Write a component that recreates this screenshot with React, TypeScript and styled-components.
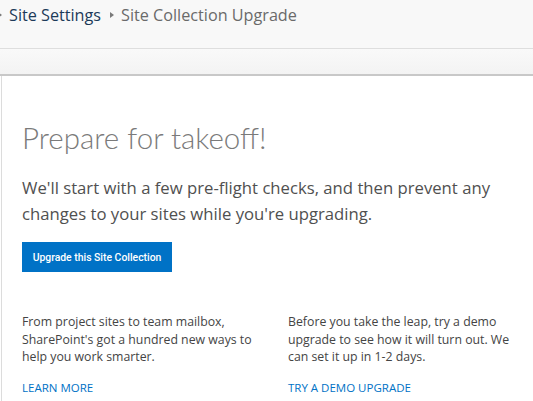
import React from "react";
import styled, { createGlobalStyle } from "styled-components";

const GlobalStyle = createGlobalStyle`
  html, body {
    margin: 0;
    padding: 0;
    background: #ffffff;
    overflow: hidden;
  }
  body {
    font-family: "Open Sans", "Noto Sans", sans-serif;
  }
`;

const Page = styled.div`
  width: 533px;
  height: 401px;
  display: flex;
  flex-direction: column;
  overflow: hidden;
`;

const Header = styled.div`
  height: 49px;
  background: #f8f8f8;
  border-bottom: 1px solid #dedede;
  display: flex;
  align-items: flex-start;
  padding-top: 3px;
  box-sizing: border-box;
`;

const Breadcrumb = styled.nav`
  display: flex;
  align-items: center;
  gap: 7px;
  margin-left: -2px;
  font-size: 16.2px;
  line-height: 24px;
`;

const Crumb = styled.span<{ $current?: boolean }>`
  color: ${(p) => (p.$current ? "#6a6a6a" : "#1c3a58")};
  margin-right: ${(p) => (p.$current ? "0" : "2px")};
`;

const Arrow = styled.span`
  width: 0;
  height: 0;
  border-top: 3px solid transparent;
  border-bottom: 3px solid transparent;
  border-left: 4px solid #7a7a7a;
`;

const Ribbon = styled.div`
  height: 27px;
  background: linear-gradient(to bottom, #f9f9f9, #f3f3f3);
  border-bottom: 2px solid #c8c8c8;
  box-sizing: border-box;
`;

const Content = styled.main`
  flex: 1;
  margin-left: 1px;
  border-left: 1px solid #dcdcdc;
  padding: 42px 0 0 20px;
`;

const Title = styled.h1`
  margin: 0;
  font-family: "Lato", "Open Sans", sans-serif;
  font-weight: 300;
  font-size: 29.5px;
  line-height: 40px;
  color: #7a7a7a;
`;

const Lead = styled.p`
  margin: 17px 0 0;
  font-size: 16.7px;
  font-weight: 400;
  line-height: 26px;
  color: #505050;
`;

const PrimaryButton = styled.button`
  display: flex;
  align-items: center;
  justify-content: center;
  margin-top: 15px;
  height: 30px;
  width: 150px;
  padding: 0;
  border: none;
  background: #0072c6;
  color: #ffffff;
  font-family: "Roboto", "Liberation Sans", Arial, sans-serif;
  font-size: 10.4px;
  font-weight: 500;
  cursor: pointer;
`;

const Columns = styled.div`
  margin-top: 41px;
  display: grid;
  grid-template-columns: 266px 1fr;
`;

const Column = styled.div`
  display: flex;
  flex-direction: column;
`;

const Blurb = styled.p`
  margin: 0;
  font-size: 12.3px;
  line-height: 17.5px;
  color: #444444;
`;

const MoreLink = styled.a`
  margin-top: 14px;
  font-size: 11.5px;
  color: #0072c6;
  text-decoration: none;
  text-transform: uppercase;
`;

export default function App() {
  return (
    <Page>
      <GlobalStyle />
      <Header>
        <Breadcrumb>
          <Arrow />
          <Crumb>Site Settings</Crumb>
          <Arrow />
          <Crumb $current>Site Collection Upgrade</Crumb>
        </Breadcrumb>
      </Header>
      <Ribbon />
      <Content>
        <Title>Prepare for takeoff!</Title>
        <Lead>
          We'll start with a few pre-flight checks, and then prevent any
          <br />
          changes to your sites while you're upgrading.
        </Lead>
        <PrimaryButton>Upgrade this Site Collection</PrimaryButton>
        <Columns>
          <Column>
            <Blurb>
              From project sites to team mailbox,
              <br />
              SharePoint's got a hundred new ways to
              <br />
              help you work smarter.
            </Blurb>
            <MoreLink href="#">Learn more</MoreLink>
          </Column>
          <Column>
            <Blurb>
              Before you take the leap, try a demo
              <br />
              upgrade to see how it will turn out. We
              <br />
              can set it up in 1-2 days.
            </Blurb>
            <MoreLink href="#">Try a demo upgrade</MoreLink>
          </Column>
        </Columns>
      </Content>
    </Page>
  );
}
